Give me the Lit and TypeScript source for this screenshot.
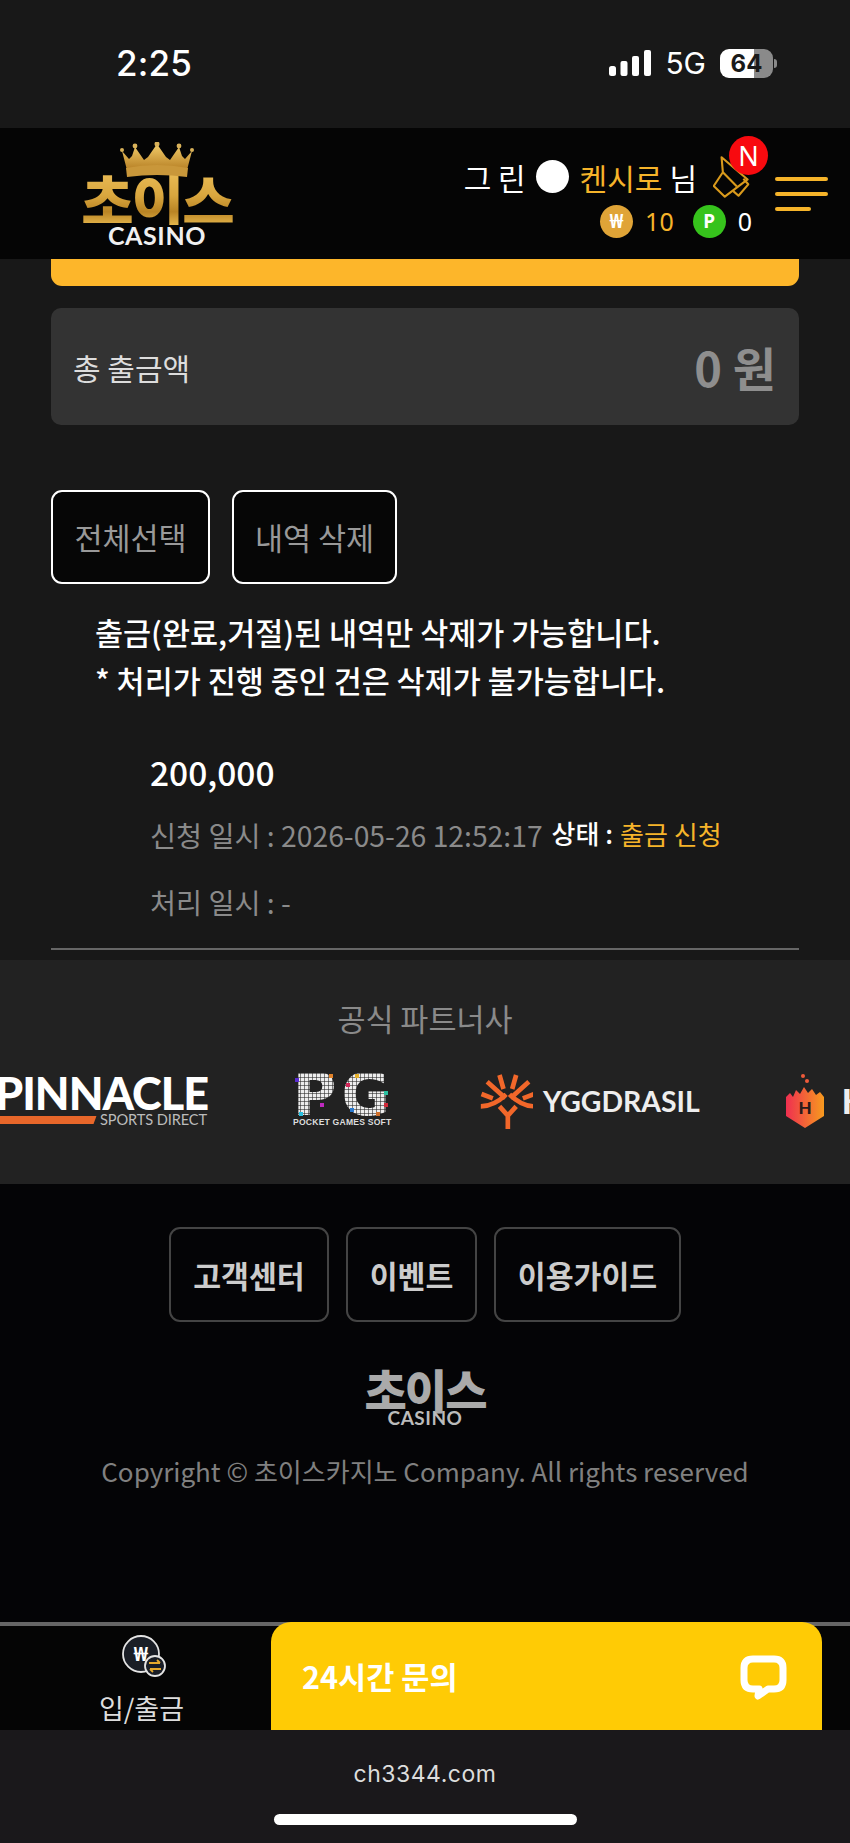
import { LitElement, html, css } from "lit";
import { customElement } from "lit/decorators.js";

const PG_DOTS: [number, number, string][] = [
  [2, 5, "#5a2bd0"], [36, 1, "#e0822a"], [62, 1, "#e6b02a"], [53, 10, "#d4285a"], [91, 18, "#2ac0a0"],
  [91, 30, "#d02a3a"], [57, 35, "#2a7ad0"], [27, 30, "#c02ac0"], [6, 39, "#2ac0e0"], [83, 39, "#d0702a"],
];

@customElement("app-root")
export class AppRoot extends LitElement {
  static styles = css`
    :host { display: block; width: 850px; height: 1843px; overflow: hidden; background: #181818; font-family: "Noto Sans CJK KR", "Noto Sans", sans-serif; color: #fff; }
    * { box-sizing: border-box; }
    .status { height: 128px; background: #181818; display: flex; align-items: flex-start; padding: 40px 73px 0 116px; justify-content: space-between; }
    .time { font: 500 35px/1 Inter, sans-serif; margin-top: 6px; letter-spacing: 0.2px; }
    .sys { display: flex; align-items: center; margin-top: 8px; }
    .net { font: 400 30px/1 Inter, sans-serif; margin: 0 14px 0 14px; }
    .batt { position: relative; width: 53px; height: 29px; border-radius: 9px; overflow: hidden; background: linear-gradient(90deg, #fff 0 64%, #8a8a8a 64% 100%); color: #1a1a1a; font: 700 24px/29px Inter, sans-serif; text-align: center; }
    .nub { width: 3px; height: 9px; background: #8a8a8a; border-radius: 0 3px 3px 0; margin-left: 1px; }

    .header { height: 131px; background: #050505; display: flex; align-items: flex-start; position: relative; }
    .logo { width: 156px; margin: 14px 0 0 79px; display: flex; flex-direction: column; align-items: center; }
    .crown { width: 74px; height: 38px; display: block; margin-bottom: -8px; position: relative; z-index: 1; }
    .ko { font: 900 57px/53px "Noto Sans CJK KR", sans-serif; letter-spacing: -2px; white-space: nowrap; background: linear-gradient(180deg, #e9bb55 0%, #d9a63e 45%, #b98424 75%, #e4b44a 100%); -webkit-background-clip: text; background-clip: text; color: transparent; height: 53px; }
    .cas { font: 700 25px/20px Lato, sans-serif; color: #f0f0f0; letter-spacing: 0.6px; }
    .who { margin-left: auto; display: flex; flex-direction: column; align-items: flex-end; margin-top: 27px; }
    .line1 { display: flex; align-items: center; font-size: 30px; line-height: 36px; }
    .gold { color: #f6b42a; }
    .dot { width: 33px; height: 33px; border-radius: 50%; background: #fff; margin: 0 11px 0 10px; }
    .sama { margin-left: 7px; }
    .mega { position: relative; width: 37px; height: 43px; margin-left: 16px; }
    .mega svg { width: 37px; height: 43px; display: block; }
    .badge { position: absolute; left: 16px; top: -19px; width: 39px; height: 39px; border-radius: 50%; background: #f80a0f; color: #fff; font: 400 27px/39px "Noto Sans", sans-serif; text-align: center; }
    .line2 { display: flex; align-items: center; margin: 7px -2px 0 0; font: 400 25px/33px "Noto Sans", sans-serif; }
    .coin { width: 33px; height: 33px; border-radius: 50%; font: 700 19px/33px "Noto Sans", sans-serif; text-align: center; color: #fff; }
    .coin.w { background: #e0a437; }
    .coin.p { background: #36c31c; margin-left: 19px; }
    .v { margin-left: 12px; }
    .burger { width: 53px; margin: 49px 22px 0 25px; display: flex; flex-direction: column; gap: 11px; }
    .burger i { display: block; height: 4px; background: #f6b42a; border-radius: 2px; }
    .burger i:last-child { width: 36px; }

    .content { height: 701px; background: #181818; padding: 0 51px; }
    .ybar { height: 27px; background: #fdb62a; border-radius: 0 0 11px 11px; }
    .total { height: 117px; margin-top: 22px; background: #333; border-radius: 10px; display: flex; align-items: center; justify-content: space-between; padding: 0 23px 0 22px; }
    .total span { font-size: 30px; color: #ddd; }
    .total b { font-size: 47px; color: #8e8e8e; font-weight: 700; }
    .btns { display: flex; gap: 22px; margin-top: 65px; }
    .btn { height: 94px; border: 2px solid #fff; border-radius: 11px; background: #060606; color: #999; font-size: 30.500px; display: flex; align-items: center; justify-content: center; }
    .b1 { width: 159px; }
    .b2 { width: 165px; }
    .notice { margin: 24px 0 0 44px; font-size: 30.500px; font-weight: 500; line-height: 48px; white-space: nowrap; }
    .item { margin: 46px 0 0 99px; }
    .amt { font-size: 33.500px; font-weight: 500; line-height: 44px; }
    .row { display: flex; align-items: center; font-size: 28.300px; color: #8a8a8a; white-space: nowrap; line-height: 40px; }
    .row.a { margin-top: 21px; }
    .row.b { margin-top: 27px; }
    .row b { color: #fff; font-weight: 500; font-size: 26px; margin: -4px 0 0 9px; }
    .row em { font-style: normal; color: #f6b42a; font-size: 26px; margin: -2px 0 0 7px; }
    .rule { height: 2px; background: #666; margin-top: 26px; }

    .partners { height: 224px; background: #222; position: relative; overflow: hidden; display: flex; flex-direction: column; align-items: center; }
    .phead { font-size: 30.500px; color: #8a8a8a; line-height: 40px; margin-top: 38px; }
    .plogos { width: 850px; display: flex; align-items: flex-start; margin-top: 35px; height: 70px; }
    .pin { width: 213px; margin-left: -5px; display: flex; flex-direction: column; flex: none; }
    .pin .big { font: 900 45px/40px Lato, "Liberation Sans", sans-serif; letter-spacing: -1px; height: 40px; white-space: nowrap; }
    .pin .sub { display: flex; align-items: center; height: 14px; }
    .pin .sub i { display: block; width: 98px; height: 8px; background: #e8672a; transform: skewX(-20deg); margin-left: 2px; }
    .pin .sub span { font: 400 14.600px/14px Lato, sans-serif; color: #bbb; margin-left: 5px; letter-spacing: -0.1px; white-space: nowrap; }
    .pg { width: 104px; margin-left: 85px; display: flex; flex-direction: column; position: relative; flex: none; }
    .pg .big { font: 700 59px/44px "DejaVu Sans", sans-serif; letter-spacing: 5px; height: 44px; color: #eee; white-space: nowrap;
      -webkit-mask-image: repeating-linear-gradient(90deg, #000 0 3px, rgba(0,0,0,.45) 3px 4px), repeating-linear-gradient(0deg, #000 0 3px, rgba(0,0,0,.45) 3px 4px);
      -webkit-mask-composite: source-in; mask-composite: intersect; }
    .pg .sub { font: 700 8.600px/11px "Liberation Sans", sans-serif; color: #ddd; letter-spacing: 0.2px; white-space: nowrap; }
    .pg s { position: absolute; width: 4px; height: 4px; }
    .ygg { display: flex; align-items: center; margin-left: 83px; height: 56px; flex: none; }
    .ygg svg { width: 53px; height: 55px; display: block; }
    .ygg span { font: 700 28.400px/1 Lato, sans-serif; color: #eee; margin-left: 10px; }
    .hab { display: flex; align-items: center; margin-left: 86px; height: 56px; flex: none; }
    .hab svg { width: 38px; height: 56px; display: block; }
    .hab span { font: 900 34px/1 Lato, sans-serif; color: #eee; margin-left: 18px; }

    .footer { height: 438px; background: #040406; display: flex; flex-direction: column; align-items: center; }
    .fbtns { display: flex; gap: 17px; margin-top: 43px; }
    .fbtn { height: 95px; border: 2px solid #444; border-radius: 11px; font-size: 30.300px; font-weight: 700; color: #ccc; display: flex; align-items: center; justify-content: center; }
    .fb1 { width: 160px; }
    .fb2 { width: 131px; }
    .fb3 { width: 187px; }
    .flogo { margin-top: 45px; display: flex; flex-direction: column; align-items: center; }
    .flogo .ko2 { font: 900 46px/43px "Noto Sans CJK KR", sans-serif; letter-spacing: -2px; color: #aaa; height: 43px; white-space: nowrap; }
    .flogo .cas2 { font: 700 19px/16px Lato, sans-serif; color: #bbb; letter-spacing: 0.5px; }
    .copy { font-size: 26px; color: #808080; line-height: 40px; margin-top: 25px; white-space: nowrap; }

    .nav { height: 108px; background: #050505; position: relative; border-top: 4px solid #666; display: flex; align-items: flex-start; }
    .dep { width: 271px; margin-top: -4px; display: flex; flex-direction: column; align-items: center; padding-left: 12px; }
    .dep svg { width: 46px; height: 44px; display: block; margin-top: 13px; margin-left: 7px; }
    .dep span { font-size: 27px; line-height: 36px; color: #ddd; margin-top: 11px; }
    .call { width: 551px; height: 108px; margin-top: -4px; background: #ffcb05; border-radius: 20px 20px 0 0; display: flex; align-items: center; justify-content: space-between; padding: 0 35px 0 31px; }
    .call span { font-size: 30.600px; font-weight: 700; color: #fff; }
    .call svg { width: 47px; height: 46px; display: block; margin-top: 3px; }

    .safari { height: 113px; background: #1a181b; display: flex; flex-direction: column; align-items: center; }
    .url { font: 400 23px/30px Inter, sans-serif; color: #ddd; margin-top: 29px; letter-spacing: 0.5px; }
    .home { width: 303px; height: 11px; border-radius: 6px; background: #fff; margin-top: 25px; }
  `;

  render() {
    return html`
      <div class="status">
        <div class="time">2:25</div>
        <div class="sys">
          <svg width="42" height="26" viewBox="0 0 42 26"><rect x="0" y="16" width="7" height="10" rx="2.500" fill="#fff"/><rect x="11.500" y="11" width="7" height="15" rx="2" fill="#fff"/><rect x="23" y="6" width="7" height="20" rx="2" fill="#fff"/><rect x="35" y="0" width="7" height="26" rx="2" fill="#fff"/></svg>
          <div class="net">5G</div>
          <div class="batt">64</div><div class="nub"></div>
        </div>
      </div>

      <div class="header">
        <div class="logo">
          <svg class="crown" viewBox="0 0 74 38">
            <defs><linearGradient id="cg" x1="0" y1="0" x2="0" y2="1"><stop offset="0" stop-color="#f3cd6a"/><stop offset="1" stop-color="#b67f24"/></linearGradient></defs>
            <path d="M7 28 L2 9 L9 17 L12 14 L15 5 L24 18 L28 15 L37 2 L46 15 L50 18 L59 5 L62 14 L65 17 L72 9 L67 28 Z" fill="url(#cg)"/>
            <path d="M6 26 Q37 20 68 26 L67 35 Q37 31 7 35 Z" fill="#c9973a"/>
            <circle cx="2" cy="8" r="2" fill="#d9b25a"/><circle cx="15" cy="4" r="2.400" fill="#d9b25a"/><circle cx="37" cy="2" r="2.500" fill="#d9b25a"/><circle cx="59" cy="4" r="2.400" fill="#d9b25a"/><circle cx="72" cy="8" r="2" fill="#d9b25a"/>
          </svg>
          <div class="ko">초이스</div>
          <div class="cas">CASINO</div>
        </div>
        <div class="who">
          <div class="line1">
            <span>그 린</span><i class="dot"></i><span class="gold">켄시로</span><span class="sama">님</span>
            <div class="mega">
              <svg viewBox="22 75 113 132"><g fill="none" stroke="#d99a1c" stroke-width="6.500" stroke-linejoin="round"><path d="M48 82 L128 150 L58 203 L24 170 L52 128 Z"/><path d="M52 128 L95 172"/><path d="M84 186 L100 200 L130 165 L115 148"/></g></svg>
              <div class="badge">N</div>
            </div>
          </div>
          <div class="line2">
            <div class="coin w">₩</div><span class="v gold">10</span>
            <div class="coin p">P</div><span class="v">0</span>
          </div>
        </div>
        <div class="burger"><i></i><i></i><i></i></div>
      </div>

      <div class="content">
        <div class="ybar"></div>
        <div class="total"><span>총 출금액</span><b>0 원</b></div>
        <div class="btns"><div class="btn b1">전체선택</div><div class="btn b2">내역 삭제</div></div>
        <div class="notice">출금(완료,거절)된 내역만 삭제가 가능합니다.<br />* 처리가 진행 중인 건은 삭제가 불가능합니다.</div>
        <div class="item">
          <div class="amt">200,000</div>
          <div class="row a">신청 일시 : 2026-05-26 12:52:17<b>상태 :</b><em>출금 신청</em></div>
          <div class="row b">처리 일시 : -</div>
        </div>
        <div class="rule"></div>
      </div>

      <div class="partners">
        <div class="phead">공식 파트너사</div>
        <div class="plogos">
          <div class="pin"><div class="big">PINNACLE</div><div class="sub"><i></i><span>SPORTS DIRECT</span></div></div>
          <div class="pg">
            <div class="big">PG</div><div class="sub">POCKET GAMES SOFT</div>
            ${PG_DOTS.map(([x, y, c]) => html`<s style="left:${x}px;top:${y}px;background:${c}"></s>`)}
          </div>
          <div class="ygg">
            <svg viewBox="15 15 156 165"><g fill="none" stroke="#f2672a" stroke-width="14"><path d="M97 180 V140 M97 140 L72 112 M97 140 L122 112"/><path d="M35 38 L90 88 M72 18 L84 60 M122 18 L110 60 M160 38 L105 88"/><path d="M18 75 L52 88 M176 75 L142 88"/><path d="M16 112 Q55 112 92 76 M178 112 Q139 112 102 76"/></g></svg>
            <span>YGGDRASIL</span>
          </div>
          <div class="hab">
            <svg viewBox="0 0 38 56"><defs><linearGradient id="hg" x1="0" y1="0" x2="1" y2="0"><stop offset="0" stop-color="#ef2f50"/><stop offset="1" stop-color="#f79a1e"/></linearGradient></defs><path d="M0 24 L4 20 L7 24 L10 17 L14 21 L18 14 L22 20 L26 16 L30 22 L34 19 L38 24 V43 L19 55 L0 43 Z" fill="url(#hg)"/><circle cx="17" cy="3" r="2" fill="#ef5a3a"/><circle cx="21" cy="8" r="2" fill="#ef5a3a"/><text x="19" y="41" font-family="Lato" font-weight="900" font-size="17" text-anchor="middle" fill="#2b1a1a">H</text></svg>
            <span>H</span>
          </div>
        </div>
      </div>

      <div class="footer">
        <div class="fbtns">
          <div class="fbtn fb1">고객센터</div>
          <div class="fbtn fb2">이벤트</div>
          <div class="fbtn fb3">이용가이드</div>
        </div>
        <div class="flogo"><div class="ko2">초이스</div><div class="cas2">CASINO</div></div>
        <div class="copy">Copyright © 초이스카지노 Company. All rights reserved</div>
      </div>

      <div class="nav">
        <div class="dep">
          <svg viewBox="0 0 46 44">
            <circle cx="19" cy="19" r="18" fill="#1a1e26" stroke="#e4e4e4" stroke-width="1.800"/>
            <text x="19" y="26" font-family="Noto Sans" font-weight="700" font-size="20" text-anchor="middle" fill="#fff">₩</text>
            <circle cx="33" cy="31" r="10" fill="#1a1e26" stroke="#e4e4e4" stroke-width="1.800"/>
            <path d="M27 28 H38 M35 25 L38 28 M39 34 H28 M31 37 L28 34" fill="none" stroke="#e6a92c" stroke-width="1.800"/>
          </svg>
          <span>입/출금</span>
        </div>
        <div class="call">
          <span>24시간 문의</span>
          <svg viewBox="0 0 47 46"><path d="M13 4 H34 Q43 4 43 13 V25 Q43 34 34 34 H28 L18 41 L19 34 H13 Q4 34 4 25 V13 Q4 4 13 4 Z" fill="none" stroke="#fff" stroke-width="7" stroke-linejoin="round"/></svg>
        </div>
      </div>

      <div class="safari">
        <div class="url">ch3344.com</div>
        <div class="home"></div>
      </div>
    `;
  }
}
